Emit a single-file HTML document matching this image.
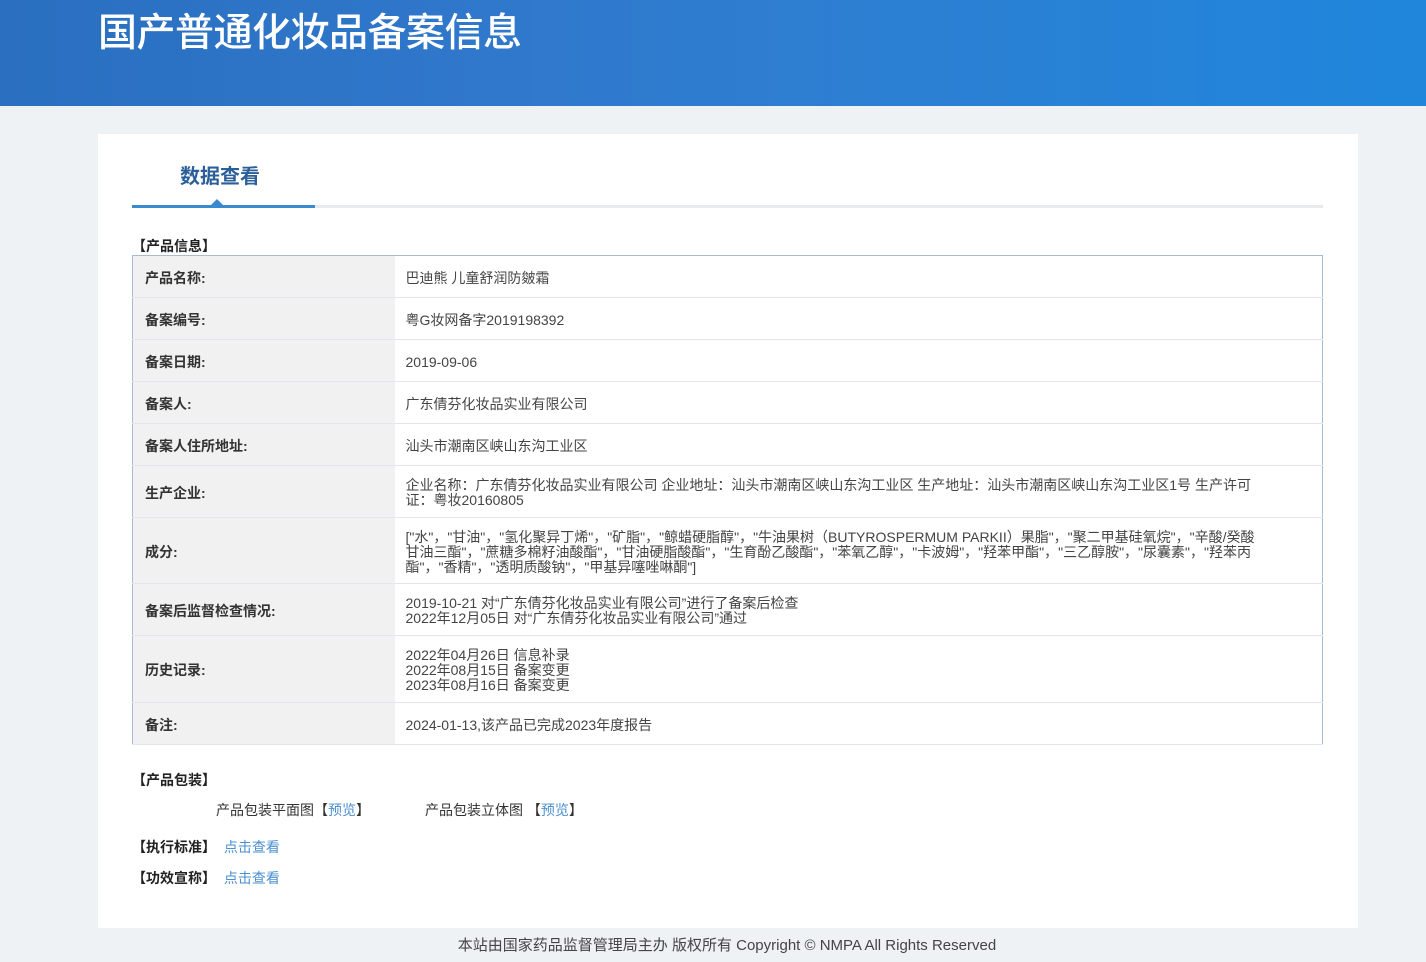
<!DOCTYPE html>
<html><head><meta charset="utf-8"><style>
*{margin:0;padding:0;box-sizing:border-box}
body{width:1426px;height:962px;background:#eef2f5;font-family:"Liberation Sans","Noto Sans CJK SC",sans-serif;color:#333;position:relative;overflow:hidden}
.hdr{position:absolute;left:0;top:0;width:1426px;height:106px;background:linear-gradient(90deg,#2a6fc0 0%,#3078cc 35%,#2d7fd2 60%,#1f86dc 100%)}
.hdr h1{position:absolute;left:98px;top:2px;font-size:39px;font-weight:500;color:#fff;letter-spacing:-0.5px;font-family:"Noto Sans CJK SC",sans-serif}
.panel{position:absolute;left:98px;top:134px;width:1260px;height:794px;background:#fff}
.tab{position:absolute;left:180px;top:160px;font-size:20px;font-weight:bold;color:#2b5f9a;font-family:"Noto Sans CJK SC",sans-serif}
.line{position:absolute;left:132px;top:205px;width:1191px;height:3px;background:#e8ebee}
.line2{position:absolute;left:132px;top:205px;width:183px;height:3px;background:#3a8ad0}
.tri{position:absolute;left:211px;top:199px;width:0;height:0;border-left:6px solid transparent;border-right:6px solid transparent;border-bottom:6px solid #3a8ad0}
.sec{position:absolute;font-size:14px;font-weight:bold;color:#222}
table{position:absolute;left:132px;top:255px;width:1191px;border-collapse:collapse;border:1px solid #a9bad4;font-size:14px}
td{border-bottom:1px solid #e3e6ea;vertical-align:middle;line-height:15px;padding-top:3px}
td.l{width:262px;background:#f1f1f1;font-weight:bold;padding-left:12px;color:#333}
td.v{padding-left:11px;color:#444;padding-right:66px}
.lk{color:#4a8fd0}
.ft{position:absolute;top:934px;left:0;width:1454px;text-align:center;font-size:15px;color:#444}
.t{position:absolute;font-size:14px;color:#333}
</style></head><body>
<div class="hdr"><h1>国产普通化妆品备案信息</h1></div>
<div class="panel"></div>
<div class="tab">数据查看</div>
<div class="line"></div><div class="line2"></div><div class="tri"></div>
<div class="sec" style="left:132px;top:236px">【产品信息】</div>
<table>
<tr style="height:42px"><td class="l">产品名称:</td><td class="v">巴迪熊 儿童舒润防皴霜</td></tr>
<tr style="height:42px"><td class="l">备案编号:</td><td class="v">粤G妆网备字2019198392</td></tr>
<tr style="height:42px"><td class="l">备案日期:</td><td class="v">2019-09-06</td></tr>
<tr style="height:42px"><td class="l">备案人:</td><td class="v">广东倩芬化妆品实业有限公司</td></tr>
<tr style="height:42px"><td class="l">备案人住所地址:</td><td class="v">汕头市潮南区峡山东沟工业区</td></tr>
<tr style="height:52px"><td class="l">生产企业:</td><td class="v">企业名称：广东倩芬化妆品实业有限公司 企业地址：汕头市潮南区峡山东沟工业区 生产地址：汕头市潮南区峡山东沟工业区1号 生产许可证：粤妆20160805</td></tr>
<tr style="height:66px"><td class="l">成分:</td><td class="v">["水"，"甘油"，"氢化聚异丁烯"，"矿脂"，"鲸蜡硬脂醇"，"牛油果树（BUTYROSPERMUM PARKII）果脂"，"聚二甲基硅氧烷"，"辛酸/癸酸甘油三酯"，"蔗糖多棉籽油酸酯"，"甘油硬脂酸酯"，"生育酚乙酸酯"，"苯氧乙醇"，"卡波姆"，"羟苯甲酯"，"三乙醇胺"，"尿囊素"，"羟苯丙酯"，"香精"，"透明质酸钠"，"甲基异噻唑啉酮"]</td></tr>
<tr style="height:52px"><td class="l">备案后监督检查情况:</td><td class="v">2019-10-21 对“广东倩芬化妆品实业有限公司”进行了备案后检查<br>2022年12月05日 对“广东倩芬化妆品实业有限公司”通过</td></tr>
<tr style="height:67px"><td class="l">历史记录:</td><td class="v">2022年04月26日 信息补录<br>2022年08月15日 备案变更<br>2023年08月16日 备案变更</td></tr>
<tr style="height:42px"><td class="l">备注:</td><td class="v">2024-01-13,该产品已完成2023年度报告</td></tr>
</table>
<div class="sec" style="left:132px;top:770px">【产品包装】</div>
<div class="t" style="left:216px;top:800px">产品包装平面图【<span class="lk">预览</span>】</div>
<div class="t" style="left:425px;top:800px">产品包装立体图 【<span class="lk">预览</span>】</div>
<div class="sec" style="left:132px;top:837px">【执行标准】 <span class="lk" style="font-weight:normal;margin-left:4px">点击查看</span></div>
<div class="sec" style="left:132px;top:868px">【功效宣称】 <span class="lk" style="font-weight:normal;margin-left:4px">点击查看</span></div>
<div class="ft">本站由国家药品监督管理局主办 版权所有 Copyright © NMPA All Rights Reserved</div>
</body></html>
